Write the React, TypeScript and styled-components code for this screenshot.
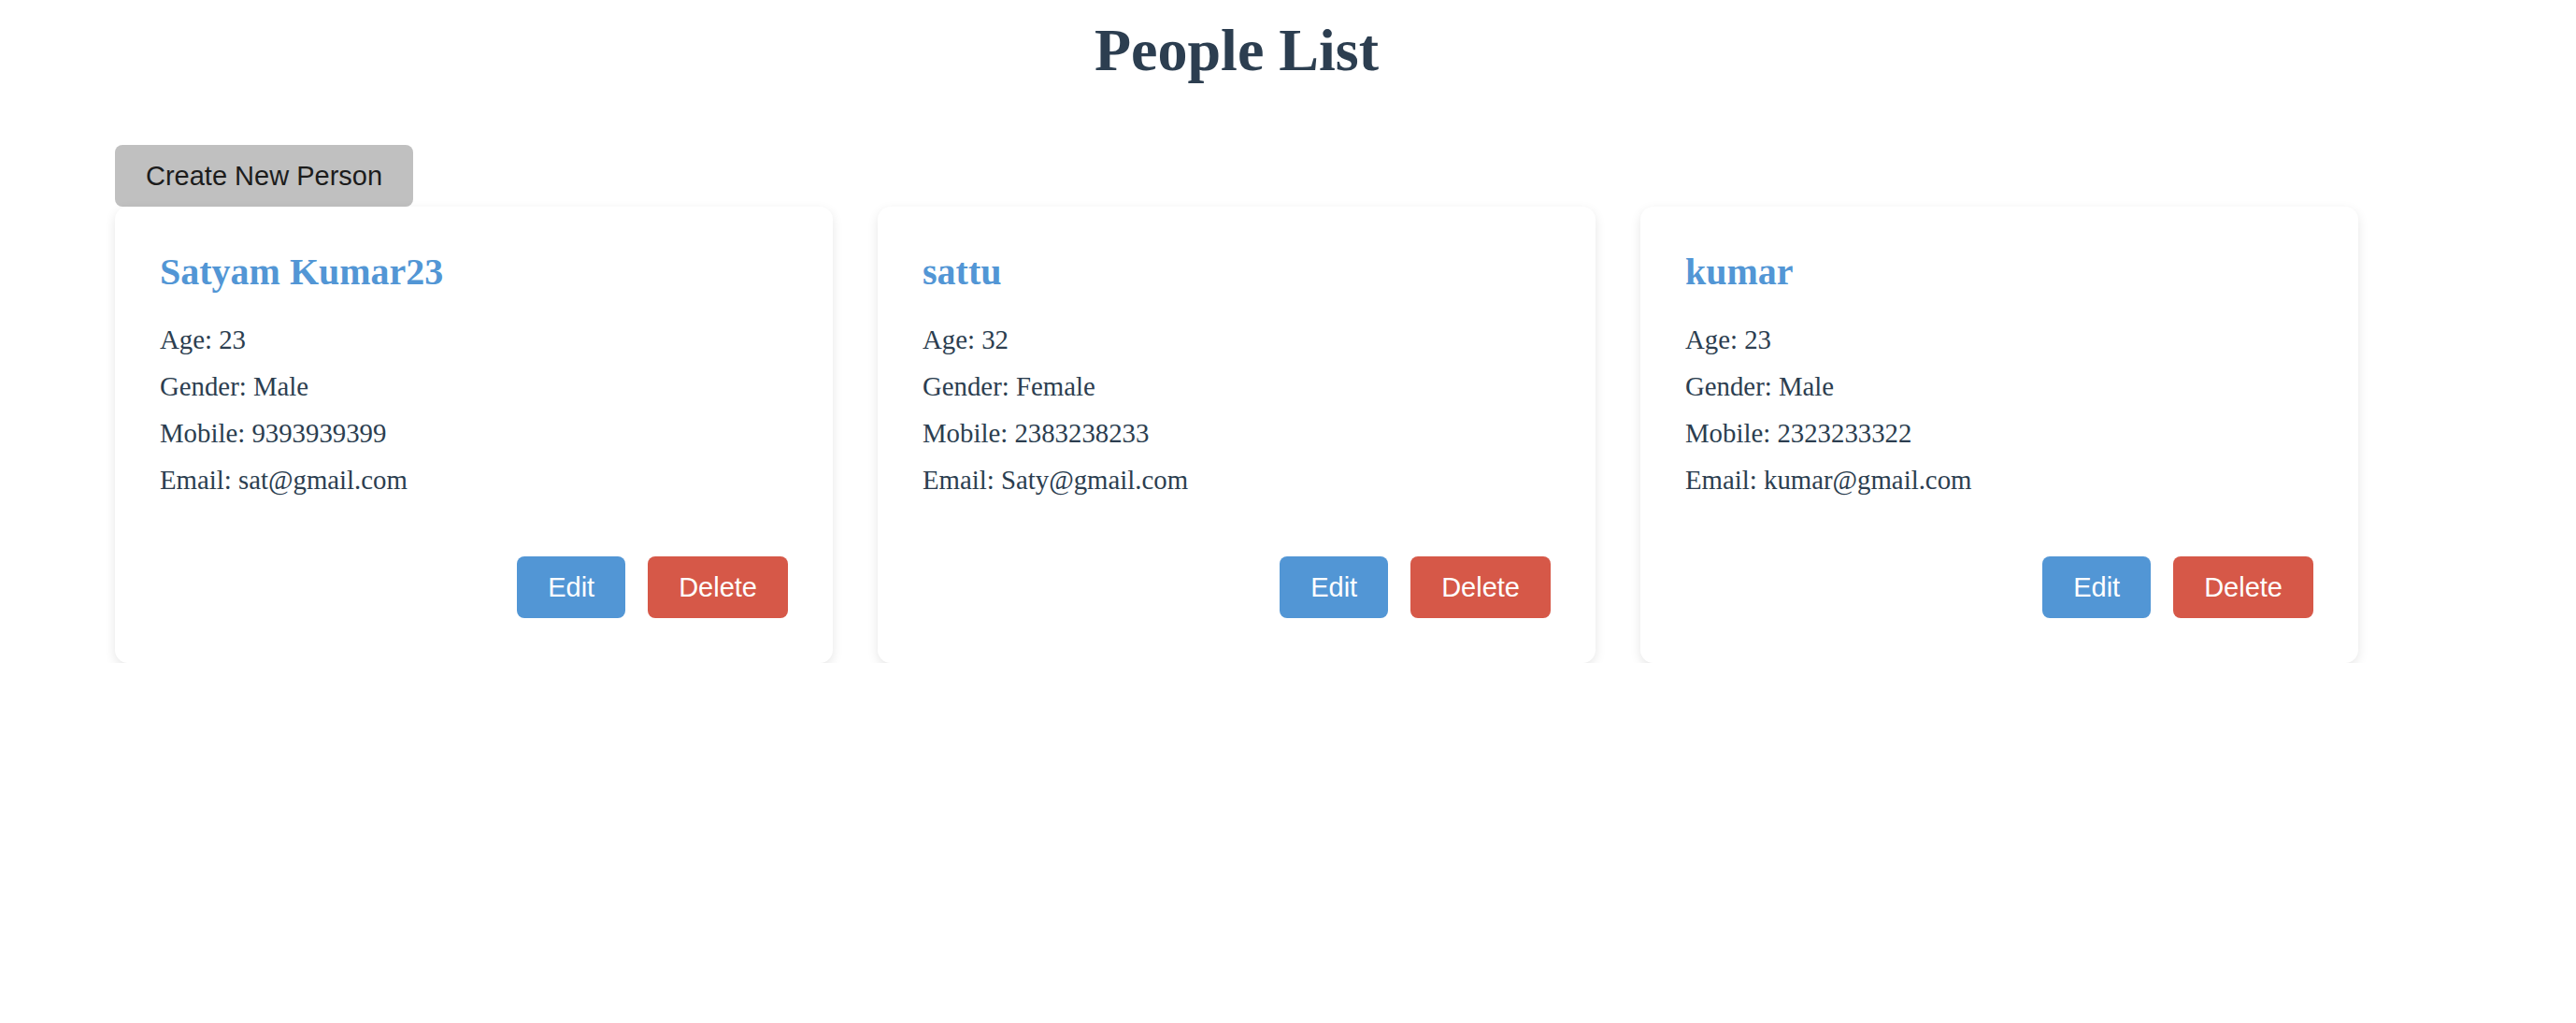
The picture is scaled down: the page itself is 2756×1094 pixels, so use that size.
import styled, { createGlobalStyle } from 'styled-components';

type Person = {
  id: number;
  name: string;
  age: number;
  gender: string;
  mobile: string;
  email: string;
};

const people: Person[] = [
  { id: 1, name: 'Satyam Kumar23', age: 23, gender: 'Male', mobile: '9393939399', email: 'sat@gmail.com' },
  { id: 2, name: 'sattu', age: 32, gender: 'Female', mobile: '2383238233', email: 'Saty@gmail.com' },
  { id: 3, name: 'kumar', age: 23, gender: 'Male', mobile: '2323233322', email: 'kumar@gmail.com' },
];

const GlobalStyle = createGlobalStyle`
  body {
    margin: 0;
    background: #ffffff;
    font-family: 'Liberation Serif', 'Times New Roman', serif;
  }
`;

type Variant = 'neutral' | 'edit' | 'delete';

const colors: Record<Variant, { bg: string; fg: string }> = {
  neutral: { bg: '#c0c0c0', fg: '#1c1c1c' },
  edit: { bg: '#5296d5', fg: '#ffffff' },
  delete: { bg: '#d65848', fg: '#ffffff' },
};

function App() {
  return (
    <>
      <GlobalStyle />
      <S.Page>
        <S.Title>People List</S.Title>
        <S.Toolbar>
          <S.Button $variant="neutral">Create New Person</S.Button>
        </S.Toolbar>
        <S.Grid>
          {people.map((p) => (
            <S.Card key={p.id}>
              <S.Name>{p.name}</S.Name>
              <S.Details>
                <S.Info>Age: {p.age}</S.Info>
                <S.Info>Gender: {p.gender}</S.Info>
                <S.Info>Mobile: {p.mobile}</S.Info>
                <S.Info>Email: {p.email}</S.Info>
              </S.Details>
              <S.Actions>
                <S.Button $variant="edit">Edit</S.Button>
                <S.Button $variant="delete">Delete</S.Button>
              </S.Actions>
            </S.Card>
          ))}
        </S.Grid>
      </S.Page>
    </>
  );
}

export default App;

const S = {
  Page: styled.div`
    width: 2400px;
    padding: 17px 0 0 123px;
    display: flex;
    flex-direction: column;
  `,
  Title: styled.h1`
    margin: 0 0 64px;
    text-align: center;
    font-family: 'Liberation Serif', 'Times New Roman', serif;
    font-size: 64px;
    font-weight: 700;
    line-height: 74px;
    color: #2c3e50;
  `,
  Toolbar: styled.div`
    display: flex;
  `,
  Grid: styled.div`
    display: grid;
    grid-template-columns: repeat(3, 768px);
    gap: 48px;
  `,
  Card: styled.div`
    display: flex;
    flex-direction: column;
    padding: 48px;
    background: #ffffff;
    border-radius: 14px;
    box-shadow: 0 4px 12px rgba(0, 0, 0, 0.1);
  `,
  Name: styled.h3`
    margin: 0 0 34px;
    font-size: 40px;
    font-weight: 700;
    line-height: 44px;
    color: #5296d5;
  `,
  Details: styled.div`
    display: flex;
    flex-direction: column;
    gap: 18px;
  `,
  Info: styled.p`
    margin: 0;
    font-size: 28.8px;
    line-height: 32px;
    color: #2c3e50;
  `,
  Actions: styled.div`
    display: flex;
    justify-content: flex-end;
    gap: 24px;
    margin-top: 66px;
  `,
  Button: styled.button<{ $variant: Variant }>`
    padding: 16px 33px;
    border: none;
    border-radius: 8px;
    font-family: 'Liberation Sans', Arial, sans-serif;
    font-size: 29px;
    line-height: 34px;
    cursor: pointer;
    background: ${({ $variant }) => colors[$variant].bg};
    color: ${({ $variant }) => colors[$variant].fg};
  `,
};
